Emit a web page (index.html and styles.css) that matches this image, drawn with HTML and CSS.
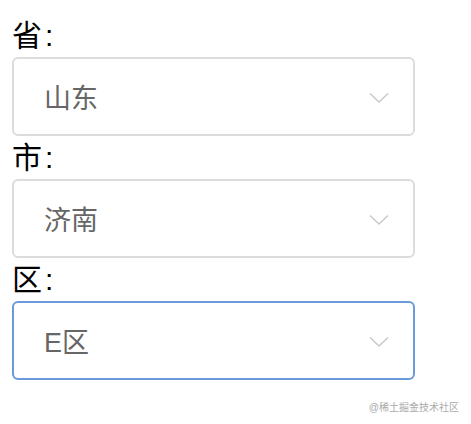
FILE: index.html
```html
<!DOCTYPE html>
<html lang="zh">
<head>
<meta charset="utf-8">
<link rel="stylesheet" href="styles.css">
</head>
<body>
<div class="form">
  <div class="field">
    <div class="label">省:</div>
    <div class="select"><span class="value">山东</span><svg class="chev" width="20" height="12" viewBox="0 0 20 12"><path d="M1 1.5 L10 10 L19 1.5" fill="none" stroke="#c8c8c8" stroke-width="1.4"/></svg></div>
  </div>
  <div class="field">
    <div class="label">市:</div>
    <div class="select"><span class="value">济南</span><svg class="chev" width="20" height="12" viewBox="0 0 20 12"><path d="M1 1.5 L10 10 L19 1.5" fill="none" stroke="#c8c8c8" stroke-width="1.4"/></svg></div>
  </div>
  <div class="field">
    <div class="label">区:</div>
    <div class="select focused"><span class="value">E区</span><svg class="chev" width="20" height="12" viewBox="0 0 20 12"><path d="M1 1.5 L10 10 L19 1.5" fill="none" stroke="#c8c8c8" stroke-width="1.4"/></svg></div>
  </div>
</div>
<div class="watermark">@稀土掘金技术社区</div>
</body>
</html>
```
FILE: styles.css
```css
html, body {
  margin: 0;
  padding: 0;
  background: #fff;
}
body {
  width: 471px;
  height: 424px;
  overflow: hidden;
  font-family: "Liberation Sans", "Noto Sans CJK SC", sans-serif;
}
.form {
  padding: 14px 0 0 12px;
  width: 403px;
}
.label {
  height: 43px;
  line-height: 43px;
  font-size: 30px;
  letter-spacing: 3px;
  color: #000;
}
.select {
  box-sizing: border-box;
  height: 79px;
  border: 2px solid #dcdcdc;
  border-radius: 6px;
  display: flex;
  align-items: center;
  justify-content: space-between;
  padding: 0 24px 0 30px;
}
.select.focused {
  border-color: #6a9ad8;
}
.value {
  font-size: 27px;
  color: #666;
}
.chev {
  display: block;
  margin-top: 2px;
}
.watermark {
  display: flex;
  justify-content: flex-end;
  padding: 19px 12px 0 0;
  font-size: 10px;
  color: #aaa;
}
```
